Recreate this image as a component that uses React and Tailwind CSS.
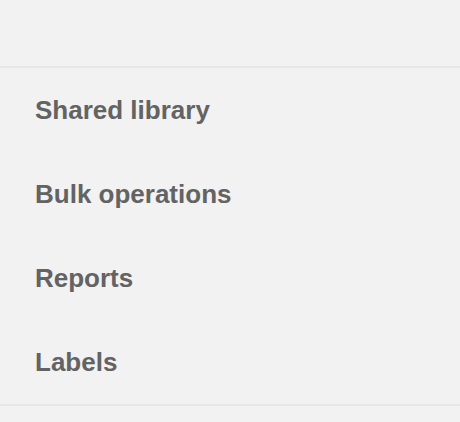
const items = ['Shared library', 'Bulk operations', 'Reports', 'Labels'];

export default function App() {
  return (
    <div className="w-[460px] h-[422px] bg-[#f2f2f2] font-['Liberation_Sans',Arial,sans-serif]">
      <div className="h-[68px] border-b-2 border-[#e6e6e6]" />
      <ul className="border-b-2 border-[#e6e6e6]">
        {items.map(label => (
          <li key={label} className="h-[84px] flex items-center px-[35px]">
            <span className="text-[26px] font-bold text-[#636363]">{label}</span>
          </li>
        ))}
      </ul>
    </div>
  );
}
